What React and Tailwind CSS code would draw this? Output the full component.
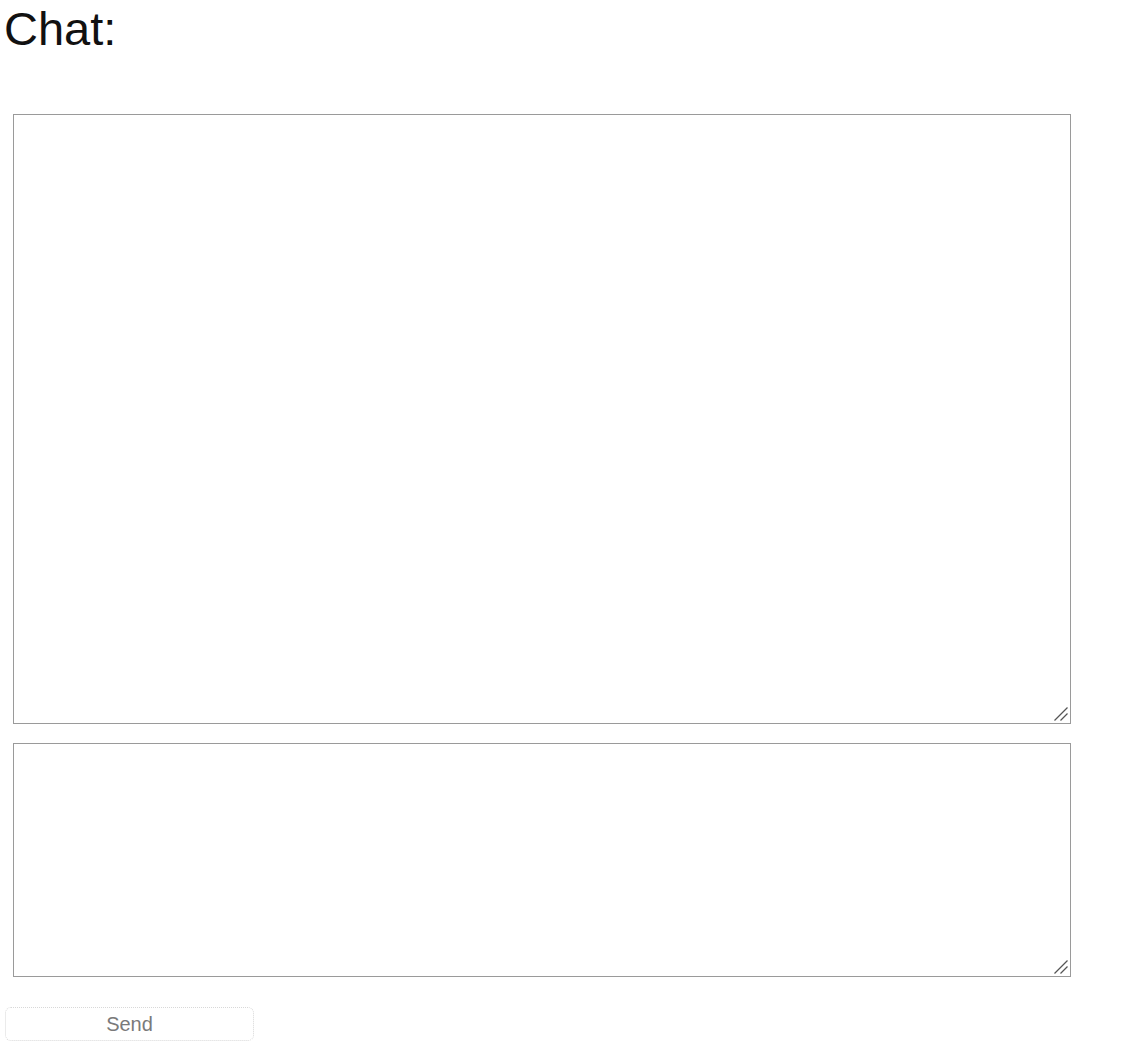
const Grip = () => (
  <svg
    className="pointer-events-none absolute bottom-[2px] right-[2px]"
    width="16"
    height="16"
    viewBox="0 0 16 16"
  >
    <path d="M1.5 14.5 L14.5 1.5 M7.5 14.5 L14.5 7.5" stroke="#555" strokeWidth="1.3" fill="none" />
  </svg>
);

const Box = ({ className }) => (
  <div className={`relative w-[1058px] ${className}`}>
    <textarea className="block h-full w-full resize-none border border-[#9a9a9a] bg-white p-1 text-sm outline-none" />
    <Grip />
  </div>
);

const App = () => {
  return (
    <div className="min-h-screen bg-white font-['Liberation_Sans',Arial,sans-serif] text-black">
      <h1 className="m-0 pl-[4px] pt-[2px] text-[47px] leading-[53px] font-normal text-[#111]">
        Chat:
      </h1>
      <div className="flex flex-col pl-[13px] pt-[59px]">
        <Box className="h-[610px]" />
        <Box className="mt-[19px] h-[234px]" />
      </div>
      <div className="pl-[5px] pt-[30px]">
        <button
          type="button"
          className="flex h-[34px] w-[249px] items-center justify-center rounded-md border border-dotted border-[#d8d8d8] bg-white text-[20px] text-[#7a7a7a]"
        >
          Send
        </button>
      </div>
    </div>
  );
};

export default App;
